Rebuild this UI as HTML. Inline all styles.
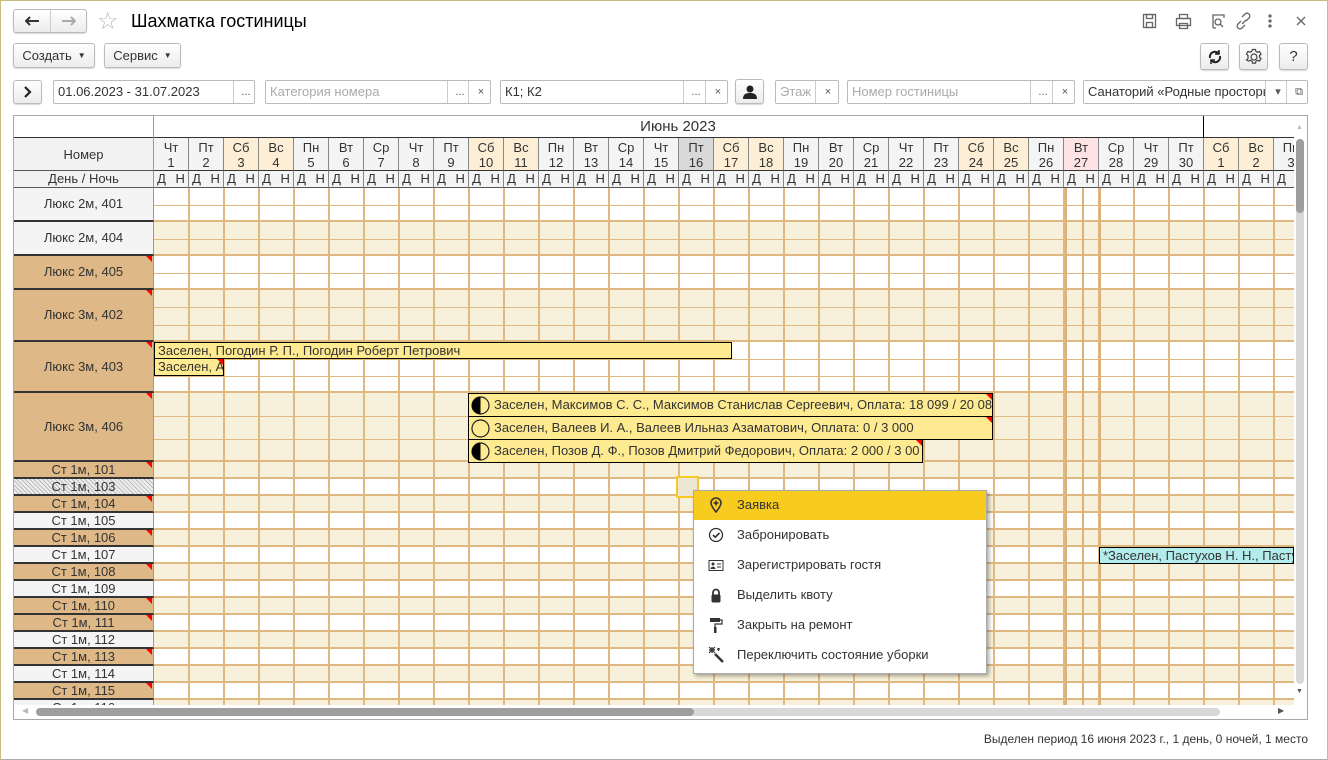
<!DOCTYPE html>
<html><head><meta charset="utf-8">
<style>
*{box-sizing:border-box;margin:0;padding:0}
body{width:1328px;height:760px;overflow:hidden;background:#fff;font-family:"Liberation Sans",sans-serif;font-size:13px;color:#333;position:relative}
.a{position:absolute}
.btn{position:absolute;border:1px solid #bbb;border-radius:3px;background:linear-gradient(#fff,#ececec);box-shadow:0 1px 1px rgba(0,0,0,.15);font-size:13px;color:#333;display:flex;align-items:center;justify-content:center}
.inp{position:absolute;border:1px solid #bbb;border-radius:2px;background:#fff;height:24px;font-size:13px;line-height:22px;padding-left:4px;white-space:nowrap;overflow:hidden}
.inp .s{position:absolute;top:0;height:22px;border-left:1px solid #ccc;text-align:center;color:#555;font-size:11px;width:25px}
.ph{color:#aaa}
.hd{position:absolute;text-align:center;font-size:13px;line-height:15px;color:#333;border-right:1px solid #888}
.lh{position:absolute;left:14px;width:140px;text-align:center;color:#333;border-right:1px solid #999}
.corner{position:absolute;right:1px;top:0;width:0;height:0;border-top:6px solid #f00;border-left:6px solid transparent}
.bk{position:absolute;background:#feea90;border:1px solid #000;white-space:nowrap;overflow:hidden;font-size:13px;color:#333;padding-left:3px}
.mi{position:absolute;left:694px;width:292px;height:30px;line-height:30px;padding-left:43px;font-size:13px;color:#333}
.mi svg{position:absolute;left:14px;top:7px}
</style></head><body>
<div class="a" style="left:0;top:0;width:1328px;height:760px;border:1px solid #c8bc7e;border-bottom-color:#aaa"></div>
<div class="btn" style="left:13px;top:9px;width:74px;height:24px;justify-content:flex-start">
 <span style="width:37px;display:flex;justify-content:center"><svg width="14" height="10"><path d="M1 5h13M5 1L1 5l4 4" fill="none" stroke="#333" stroke-width="2"/></svg></span><span style="width:36px;display:flex;justify-content:center;border-left:1px solid #ccc;height:22px;align-items:center"><svg width="14" height="10"><path d="M0 5h13M9 1l4 4-4 4" fill="none" stroke="#aaa" stroke-width="2"/></svg></span></div>
<div class="a" style="left:97px;top:7px;font-size:24px;color:#bbb">☆</div>
<div class="a" style="left:131px;top:11px;font-size:18px;color:#000">Шахматка гостиницы</div>
<svg class="a" style="left:1140px;top:11px" width="180" height="20" fill="none" stroke="#666" stroke-width="1.3">
 <rect x="3.5" y="3.5" width="12" height="13"/><rect x="6.5" y="3.5" width="6" height="4"/><rect x="6.5" y="11.5" width="6" height="5"/>
 <rect x="36.5" y="7.5" width="14" height="7"/><rect x="39.5" y="3.5" width="8" height="4"/><rect x="39.5" y="12.5" width="8" height="5"/>
 <path d="M73 17V4h11v3M73 17h3"/><circle cx="78" cy="11" r="3"/><path d="M80 13l3 3"/>
 <path d="M101 10l-3 3a2.5 2.5 0 0 0 4 4l3-3M106 10l3-3a2.5 2.5 0 0 0-4-4l-3 3M102 13l4-4"/>
 <circle cx="130" cy="5" r="1" fill="#666"/><circle cx="130" cy="10" r="1" fill="#666"/><circle cx="130" cy="15" r="1" fill="#666"/>
 <path d="M157 6l8 8M165 6l-8 8"/>
</svg>
<div class="btn" style="left:13px;top:43px;width:82px;height:25px">Создать <span style="font-size:8px;margin-left:6px">▼</span></div>
<div class="btn" style="left:104px;top:43px;width:77px;height:25px">Сервис <span style="font-size:8px;margin-left:6px">▼</span></div>
<div class="btn" style="left:1200px;top:43px;width:29px;height:27px"><svg width="16" height="16" viewBox="0 0 16 16" fill="none" stroke="#222" stroke-width="2"><path d="M3 9a5 5 0 0 1 9-4"/><path d="M13 7a5 5 0 0 1-9 4"/><path d="M12 1v4H8" fill="#222" stroke-width="1.5"/><path d="M4 15v-4h4" stroke-width="1.5"/></svg></div>
<div class="btn" style="left:1239px;top:43px;width:29px;height:27px"><svg width="18" height="18" viewBox="0 0 18 18" fill="none" stroke="#444" stroke-width="1.2"><circle cx="9" cy="9" r="3"/><path d="M7.5 1.5h3l.5 2 1.5.8 2-.8 1.5 2.6-1.5 1.4v1.6l1.5 1.4-1.5 2.6-2-.8-1.5.8-.5 2h-3l-.5-2-1.5-.8-2 .8L1.5 12 3 10.6V9V7.4L1.5 6 3 3.4l2 .8L6.5 3.5z"/></svg></div>
<div class="btn" style="left:1279px;top:43px;width:29px;height:27px;font-size:15px">?</div>
<div class="btn" style="left:13px;top:80px;width:29px;height:24px"><svg width="8" height="12"><path d="M1 1l5 5-5 5" fill="none" stroke="#222" stroke-width="2.2"/></svg></div>
<div class="inp" style="left:53px;top:80px;width:202px">01.06.2023 - 31.07.2023<span class="s" style="left:179px">...</span></div>
<div class="inp" style="left:265px;top:80px;width:226px"><span class="ph">Категория номера</span><span class="s" style="left:181px">...</span><span class="s" style="left:202px">×</span></div>
<div class="inp" style="left:500px;top:80px;width:228px">К1; К2<span class="s" style="left:182px">...</span><span class="s" style="left:204px">×</span></div>
<div class="btn" style="left:735px;top:79px;width:29px;height:25px"><svg width="16" height="16"><circle cx="8" cy="5" r="3.5" fill="#222"/><path d="M1 15c0-5 3-6 7-6s7 1 7 6z" fill="#222"/></svg></div>
<div class="inp" style="left:775px;top:80px;width:64px"><span class="ph">Этаж</span><span class="s" style="left:39px">×</span></div>
<div class="inp" style="left:847px;top:80px;width:228px"><span class="ph">Номер гостиницы</span><span class="s" style="left:182px">...</span><span class="s" style="left:204px">×</span></div>
<div class="inp" style="left:1083px;top:80px;width:225px">Санаторий «Родные просторы<span class="s" style="left:181px;background:#fff">▾</span><span class="s" style="left:202px;background:#fff">⧉</span></div>
<div class="a" style="left:13px;top:115px;width:1295px;height:605px;border:1px solid #a8a8a8"></div>
<div id="g"></div>
<div class="a" style="left:1296px;top:139px;width:8px;height:545px;background:#d8d8d8;border-radius:4px"></div>
<div class="a" style="left:1296px;top:139px;width:8px;height:74px;background:#9e9e9e;border-radius:4px"></div>
<div class="a" style="left:1296px;top:124px;font-size:7px;color:#bbb">▲</div>
<div class="a" style="left:1296px;top:688px;font-size:7px;color:#555">▼</div>
<div class="a" style="left:36px;top:708px;width:1184px;height:8px;background:#d8d8d8;border-radius:4px"></div>
<div class="a" style="left:36px;top:708px;width:658px;height:8px;background:#9e9e9e;border-radius:4px"></div>
<div class="a" style="left:22px;top:706px;font-size:8px;color:#bbb">◀</div>
<div class="a" style="left:1278px;top:706px;font-size:8px;color:#555">▶</div>
<div class="a" style="right:20px;top:732px;font-size:12px;color:#333">Выделен период 16 июня 2023 г., 1 день, 0 ночей, 1 место</div>
<div class="a" style="left:693px;top:490px;width:294px;height:184px;background:#fff;border:1px solid #aaa;box-shadow:2px 2px 4px rgba(0,0,0,.35)"></div>
<div class="a" style="left:694px;top:491px;width:292px;height:29px;background:#f8cb1f"></div>
<div class="mi" style="top:490px"><svg width="16" height="16"><path d="M8 15C4 10 3 8 3 6a5 5 0 0 1 10 0c0 2-1 4-5 9z" fill="none" stroke="#333" stroke-width="1.6"/><path d="M8 3.5v5M5.5 6h5" stroke="#333" stroke-width="1.6"/></svg>Заявка</div>
<div class="mi" style="top:520px"><svg width="16" height="16"><circle cx="8" cy="8" r="6.5" fill="none" stroke="#333" stroke-width="1.3"/><path d="M5 8l2.2 2.2L11.5 6" fill="none" stroke="#333" stroke-width="1.6"/></svg>Забронировать</div>
<div class="mi" style="top:550px"><svg width="16" height="16"><rect x="1" y="3.5" width="14" height="10" fill="none" stroke="#333"/><circle cx="5" cy="7" r="1.5" fill="#333"/><path d="M2.5 12c0-3 5-3 5 0z" fill="#333"/><path d="M9 7h4M9 10h4" stroke="#333"/></svg>Зарегистрировать гостя</div>
<div class="mi" style="top:580px"><svg width="16" height="16"><path d="M5 8V5.5a3 3 0 0 1 6 0V8" fill="none" stroke="#333" stroke-width="1.8"/><rect x="3.5" y="7.5" width="9" height="8" rx="1.5" fill="#333"/></svg>Выделить квоту</div>
<div class="mi" style="top:610px"><svg width="16" height="16"><rect x="2" y="1" width="10" height="4" fill="#333"/><path d="M12 3h2v4H7v3" fill="none" stroke="#333" stroke-width="1.2"/><rect x="6" y="10" width="2.5" height="6" fill="#333"/></svg>Закрыть на ремонт</div>
<div class="mi" style="top:640px"><svg width="16" height="16" stroke="#333" stroke-width="1.2"><path d="M7 7l8 8" stroke-width="2.5"/><path d="M4 0v6M1 3h6M1 0l6 6M7 0L1 6M9 2h3M10.5 1v3"/></svg>Переключить состояние уборки</div>
<script>
var g=document.getElementById('g'),h='';
var W=35;
function d(s){h+=s}
d('<div class="a" style="left:14px;top:116px;width:1280px;height:22px;background:#fff;border-bottom:1px solid #333"></div>');
d('<div class="a" style="left:153px;top:116px;width:1px;height:72px;background:#999"></div>');
d('<div class="a" style="left:600px;top:118px;width:156px;text-align:center;font-size:15px;color:#333">Июнь 2023</div>');
d('<div class="a" style="left:1203px;top:116px;width:1px;height:22px;background:#000"></div>');
d('<div class="lh" style="top:138px;height:33px;line-height:33px;background:#f2f2f2;border-bottom:1px solid #555">Номер</div>');
d('<div class="lh" style="top:171px;height:17px;line-height:16px;background:#f2f2f2;border-bottom:1px solid #555">День / Ночь</div>');
var wd=['Чт','Пт','Сб','Вс','Пн','Вт','Ср'];
var hdr='<div style="position:absolute;left:154px;top:138px;width:1140px;height:50px;overflow:hidden">';
for(var i=0;i<33;i++){var dn=i<30?i+1:i-29,w=wd[i%7],x=i*W;
 var bg=(w=='Сб'||w=='Вс')?'#fdeed6':'#f4f4f4';if(i==15)bg='#d9d9d9';if(i==26)bg='#fde3e3';
 hdr+='<div class="hd" style="left:'+x+'px;top:0;width:35px;height:33px;padding-top:2px;background:'+bg+';border-bottom:1px solid #333">'+w+'<br>'+dn+'</div>';
 hdr+='<div class="hd" style="left:'+x+'px;top:33px;width:35px;height:17px;background:#f4f4f4;border-bottom:1px solid #555;line-height:16px;word-spacing:6px">Д Н</div>';}
hdr+='</div>';d(hdr);
var rows=[['Люкс 2м, 401',188,34,2,0,'g',0],['Люкс 2м, 404',222,34,2,1,'g',0],['Люкс 2м, 405',256,34,2,0,'t',1],['Люкс 3м, 402',290,52,3,1,'t',1],['Люкс 3м, 403',342,51,3,0,'t',1],['Люкс 3м, 406',393,69,3,1,'t',1]];
var sm=[['101','t',1],['103','h',0],['104','t',1],['105','g',0],['106','t',1],['107','g',0],['108','t',1],['109','g',0],['110','t',1],['111','t',1],['112','g',0],['113','t',1],['114','g',0],['115','t',1],['116','g',0]];
sm.forEach(function(s,k){rows.push(['Ст 1м, '+s[0],462+17*k,17,1,(k+1)%2,s[1],s[2]])});
var body='<div style="position:absolute;left:14px;top:188px;width:1280px;height:517px;overflow:hidden">';
rows.forEach(function(r){var y=r[1]-188;
 var hb=r[5]=='g'?'#f4f4f4':r[5]=='t'?'#deb887':'repeating-linear-gradient(45deg,#bbb 0 1px,#eee 1px 3px)';
 body+='<div class="lh" style="left:0;top:'+y+'px;height:'+r[2]+'px;line-height:'+(r[2]-2)+'px;background:'+hb+';border-bottom:2px solid #333;font-size:13px">'+r[0]+(r[6]?'<div class="corner"></div>':'')+'</div>';
 body+='<div style="position:absolute;left:140px;top:'+y+'px;width:1140px;height:'+r[2]+'px;background:'+(r[4]?'#f7f0da':'#fff')+';border-bottom:2px solid #e0b882"></div>';
 for(var s=1;s<r[3];s++){var sy=y+Math.round(r[2]*s/r[3]);body+='<div style="position:absolute;left:140px;top:'+sy+'px;width:1140px;height:1px;background:#e0b882"></div>';}
});
for(var i=1;i<33;i++){body+='<div style="position:absolute;left:'+(139+i*W)+'px;top:0;width:2px;height:517px;background:#e0b882"></div>';}
[1065,1082,1099].forEach(function(x){body+='<div style="position:absolute;left:'+(x-14)+'px;top:0;width:2px;height:517px;background:#dcb27a"></div>'});
body+='</div>';d(body);
d('<div class="bk" style="left:154px;top:342px;width:578px;height:17px;line-height:15px">Заселен, Погодин Р. П., Погодин Роберт Петрович</div>');
d('<div class="bk" style="left:154px;top:358px;width:70px;height:18px;line-height:16px">Заселен, А<div class="corner" style="right:0"></div></div>');
var moon=function(t){return '<svg style="position:absolute;left:2px;top:2px" width="19" height="19"><circle cx="9.5" cy="9.5" r="8.5" fill="#feea90" stroke="#222" stroke-width="1.2"/>'+(t?'<path d="M9.5 1a8.5 8.5 0 0 0 0 17z" fill="#000"/>':'')+'</svg>'};
[[393,525,'Заселен, Максимов С. С., Максимов Станислав Сергеевич, Оплата: 18 099 / 20 08',1],[416,525,'Заселен, Валеев И. А., Валеев Ильназ Азаматович, Оплата: 0 / 3 000',0],[439,455,'Заселен, Позов Д. Ф., Позов Дмитрий Федорович, Оплата: 2 000 / 3 00',1]].forEach(function(b){
 d('<div class="bk" style="left:468px;top:'+b[0]+'px;width:'+b[1]+'px;height:24px;line-height:22px;padding-left:25px">'+moon(b[3])+b[2]+'<div class="corner" style="right:0"></div></div>');});
d('<div class="bk" style="left:1099px;top:547px;width:195px;height:17px;line-height:15px;background:#b3ecec">*Заселен, Пастухов Н. Н., Пастухов</div>');
d('<div class="a" style="left:676px;top:476px;width:23px;height:22px;border:2px solid #f6c924;background:#ede6d4"></div>');
g.innerHTML=h;
</script>
</body></html>
